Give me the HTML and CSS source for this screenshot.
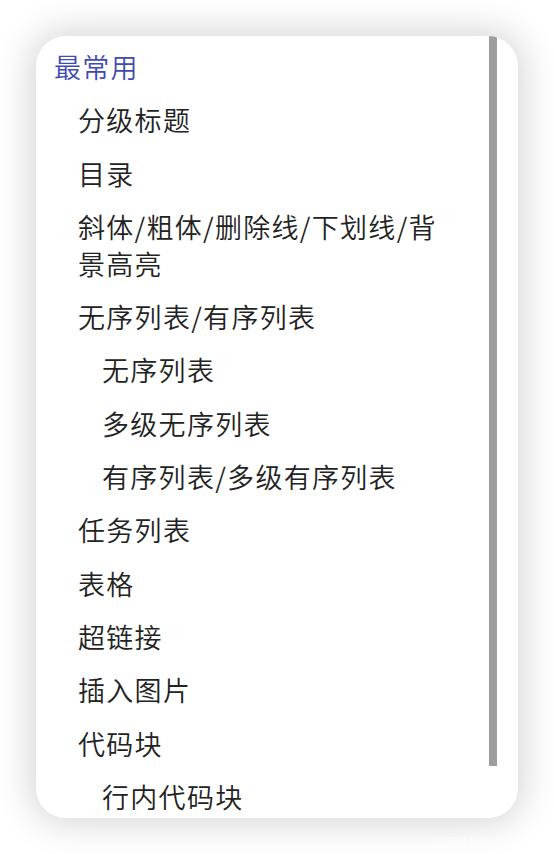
FILE: index.html
```html
<!DOCTYPE html>
<html lang="zh">
<head>
<meta charset="utf-8">
<link rel="stylesheet" href="styles.css">
</head>
<body>
<div class="page">
  <div class="card">
    <ul class="toc">
      <li class="item l1 active">最常用</li>
      <li class="item l2">分级标题</li>
      <li class="item l2">目录</li>
      <li class="item l2">斜体/粗体/删除线/下划线/背景高亮</li>
      <li class="item l2">无序列表/有序列表</li>
      <li class="item l3">无序列表</li>
      <li class="item l3">多级无序列表</li>
      <li class="item l3">有序列表/多级有序列表</li>
      <li class="item l2">任务列表</li>
      <li class="item l2">表格</li>
      <li class="item l2">超链接</li>
      <li class="item l2">插入图片</li>
      <li class="item l2">代码块</li>
      <li class="item l3">行内代码块</li>
    </ul>
    <div class="scrollbar"></div>
  </div>
  <div class="watermark">CSDN @W</div>
</div>
</body>
</html>
```

FILE: styles.css
```css
html, body {
  margin: 0;
  padding: 0;
  background: #ffffff;
}
.page {
  position: relative;
  width: 554px;
  height: 854px;
  padding: 36px 36px 0 36px;
  box-sizing: border-box;
}
.card {
  position: relative;
  width: 482px;
  height: 782px;
  background: #ffffff;
  border-radius: 30px;
  box-shadow: 0 0 36px 6px rgba(0, 0, 0, 0.16);
  overflow: hidden;
}
.toc {
  list-style: none;
  margin: 0;
  padding: 4px 36px 0 0;
  font-family: "Noto Sans CJK SC", "Noto Sans", sans-serif;
  font-size: 27px;
  font-weight: 350;
  letter-spacing: 1.3px;
  color: #222222;
}
.item {
  line-height: 37px;
  padding: 8px 0 8.3px 0;
}
.l1 { padding-left: 18px; }
.l2 { padding-left: 42px; padding-right: 40px; }
.l3 { padding-left: 66px; }
.active { color: #3f4bb4; }
.scrollbar {
  position: absolute;
  top: 0;
  right: 21px;
  width: 8px;
  height: 730px;
  background: #9e9e9e;
}
.watermark {
  position: absolute;
  right: 50px;
  bottom: 4px;
  font-family: "Liberation Sans", sans-serif;
  font-size: 14px;
  color: rgba(255, 255, 255, 0.6);
}
```
